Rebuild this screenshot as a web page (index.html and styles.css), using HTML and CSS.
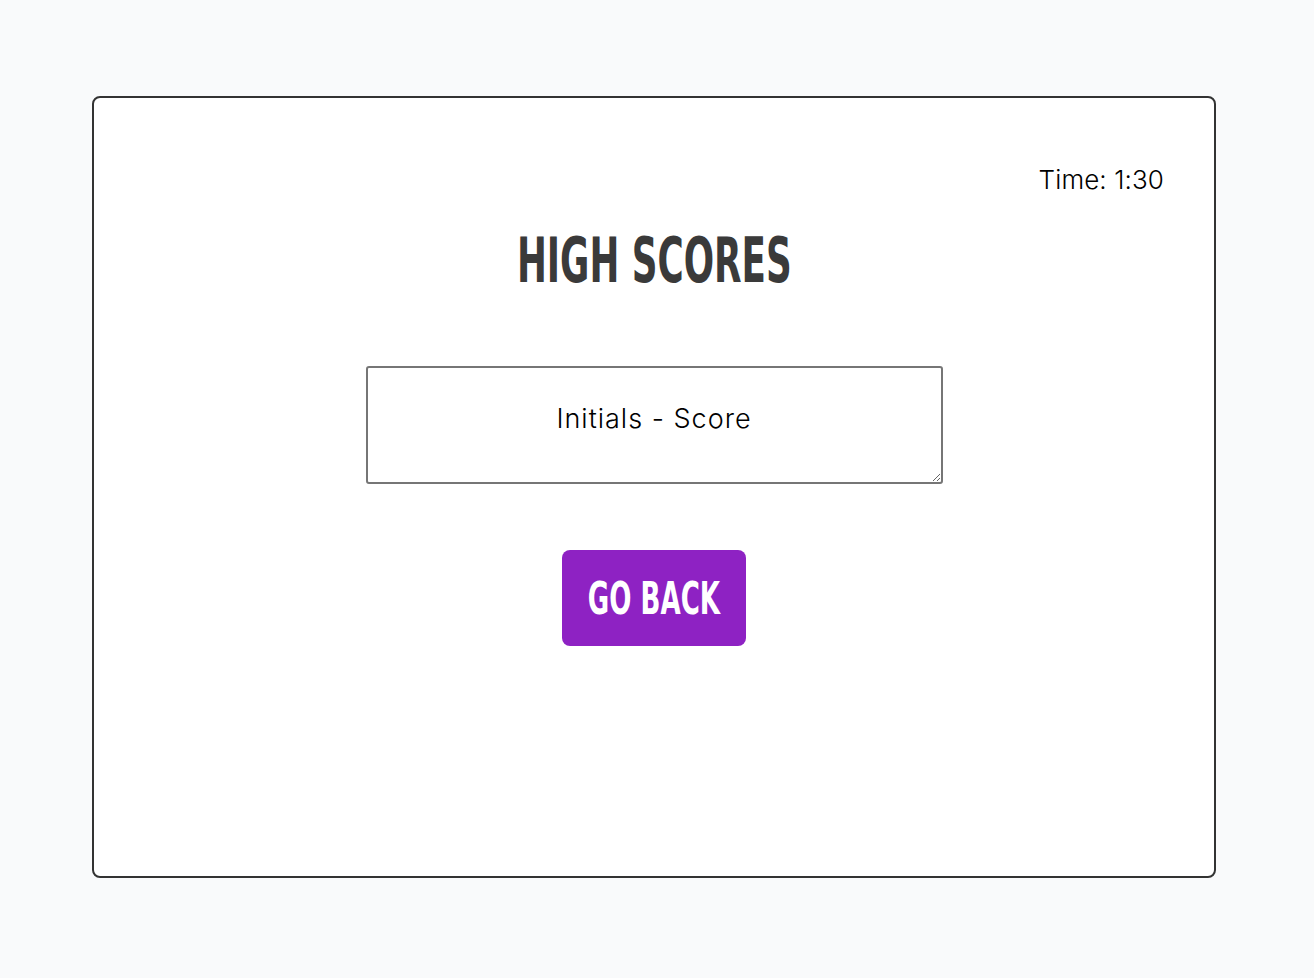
FILE: index.html
```html
<!DOCTYPE html>
<html>
<head>
<meta charset="utf-8">
<link rel="stylesheet" href="styles.css">
</head>
<body>
<main class="card">
  <div class="timer">Time: 1:30</div>
  <h1 class="title"><span class="condensed">HIGH SCORES</span></h1>
  <textarea class="scores">Initials - Score</textarea>
  <button class="back"><span class="condensed">GO BACK</span></button>
</main>
</body>
</html>
```
FILE: styles.css
```css
html, body {
  margin: 0;
  padding: 0;
  background: #f9fafb;
}
body {
  font-family: "Inter", "Open Sans", sans-serif;
  color: #000;
}
.card {
  box-sizing: border-box;
  margin: 96px 0 0 92px;
  width: 1124px;
  height: 782px;
  background: #fff;
  border: 2px solid #333;
  border-radius: 8px;
  display: flex;
  flex-direction: column;
  align-items: center;
  padding: 62px 50px 0 50px;
}
.timer {
  align-self: flex-end;
  font-size: 26px;
  font-weight: 300;
  line-height: 40px;
  letter-spacing: 0.1px;
}
.condensed {
  display: inline-block;
  white-space: nowrap;
  transform: scaleX(0.567);
}
.title {
  margin: 22px 0 0 0;
  font-family: "DejaVu Sans", sans-serif;
  font-weight: 700;
  font-size: 63px;
  line-height: 78px;
  color: #3a3a3a;
  white-space: nowrap;
  display: flex;
  justify-content: center;
  width: 100%;
}
.scores {
  box-sizing: border-box;
  margin-top: 66px;
  width: 577px;
  height: 118px;
  border: 2px solid #767676;
  border-radius: 3px;
  padding: 34px 10px 10px;
  text-align: center;
  font-family: "Inter", "Open Sans", sans-serif;
  font-weight: 300;
  font-size: 27px;
  letter-spacing: 1px;
  color: #000;
  resize: vertical;
}
.back {
  margin-top: 66px;
  width: 184px;
  height: 96px;
  border: none;
  border-radius: 8px;
  background: #8e22c3;
  color: #fff;
  font-family: "DejaVu Sans", sans-serif;
  font-weight: 700;
  font-size: 45px;
  padding: 0;
  white-space: nowrap;
  cursor: pointer;
  display: flex;
  align-items: center;
  justify-content: center;
}
.back .condensed {
  transform: scaleX(0.58);
}
```
